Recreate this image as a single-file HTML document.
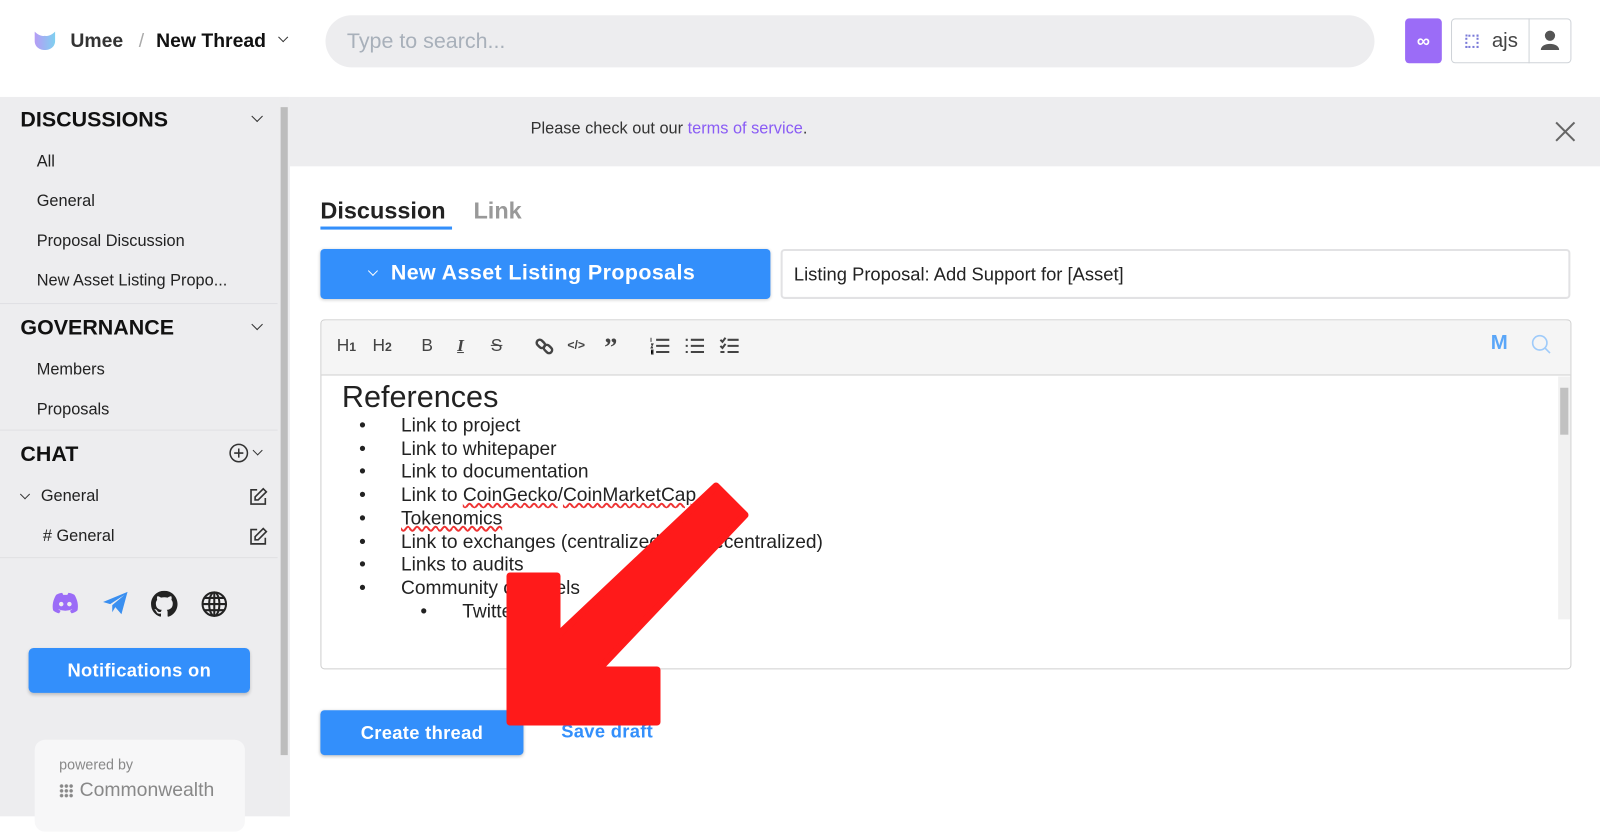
<!DOCTYPE html>
<html><head><meta charset="utf-8">
<style>
*{box-sizing:border-box;margin:0;padding:0}
body{width:1600px;height:800px;overflow:hidden;background:#fff;font-family:"Liberation Sans",Arial,sans-serif;color:#222;position:relative}
#w{position:absolute;left:0;top:0;width:1568px;height:784px;transform:scale(1.0204);transform-origin:0 0}
.a{position:absolute}
.side{left:0;top:95px;width:284px;height:705px;background:#ededef}
.sb{left:274px;top:95px;width:10px;height:705px;background:#ededef}
.sbt{left:275px;top:105px;width:7px;height:635px;background:#bdbdbd}
.hd{font-weight:bold;font-size:21px;color:#111;left:20px}
.it{font-size:16px;color:#222;left:36px}
.sep{left:0;width:272px;height:1px;background:#e0e0e3}
.chev{width:8px;height:8px;border-right:1.6px solid #333;border-bottom:1.6px solid #333;transform:rotate(45deg)}
.tb{font-size:17px;color:#444;font-weight:bold}
</style></head><body>
<div id="w">
<svg class="a" style="left:33px;top:30px" width="22" height="20" viewBox="0 0 22 20"><defs><linearGradient id="g" x1="0" x2="1"><stop offset="0" stop-color="#b69cf5"/><stop offset="1" stop-color="#7fd0f0"/></linearGradient></defs><path d="M1 1 C4 4 8 6 11 5 C14 6 18 4 21 1 L21 10 C21 16 16 19 11 19 C6 19 1 16 1 10Z" fill="url(#g)"/></svg>
<div class="a" style="left:69px;top:30px;font-size:19px;font-weight:bold;color:#333">Umee</div>
<div class="a" style="left:136px;top:30px;font-size:19px;color:#aaa">/</div>
<div class="a" style="left:153px;top:30px;font-size:19px;font-weight:bold;color:#111">New Thread</div>
<div class="a chev" style="left:274px;top:33px;width:7px;height:7px"></div>
<div class="a" style="left:319px;top:15px;width:1028px;height:51px;border-radius:26px;background:#ededef"></div>
<div class="a" style="left:340px;top:29px;font-size:21px;color:#a8b0ba">Type to search...</div>
<div class="a" style="left:1377px;top:18px;width:36px;height:44px;border-radius:4px;background:#9b6cf7;color:#fff;font-size:18px;text-align:center;line-height:44px;font-weight:bold">∞</div>
<div class="a" style="left:1422px;top:18px;width:118px;height:44px;border:1px solid #cfd3d8;border-radius:4px"></div>
<div class="a" style="left:1498px;top:18px;width:1px;height:44px;background:#cfd3d8"></div>
<div class="a" style="left:1436px;top:34px;width:13px;height:13px;border:2px dotted #7a7ad8"></div>
<div class="a" style="left:1462px;top:29px;font-size:20px;color:#444">ajs</div>
<svg class="a" style="left:1509px;top:29px" width="20" height="20" viewBox="0 0 20 20"><circle cx="10" cy="6" r="5" fill="#555"/><path d="M1 20 C1 12 19 12 19 20Z" fill="#555"/></svg>

<div class="a side"></div>
<div class="a sb"></div><div class="a sbt"></div>
<div class="a hd" style="top:106px">DISCUSSIONS</div>
<div class="a chev" style="left:248px;top:110px"></div>
<div class="a it" style="top:150px">All</div>
<div class="a it" style="top:189px">General</div>
<div class="a it" style="top:228px">Proposal Discussion</div>
<div class="a it" style="top:267px">New Asset Listing Propo...</div>
<div class="a sep" style="top:297px"></div>
<div class="a hd" style="top:310px">GOVERNANCE</div>
<div class="a chev" style="left:248px;top:314px"></div>
<div class="a it" style="top:354px">Members</div>
<div class="a it" style="top:393px">Proposals</div>
<div class="a sep" style="top:421px"></div>
<div class="a hd" style="top:434px">CHAT</div>
<svg class="a" style="left:224px;top:434px" width="20" height="20" viewBox="0 0 20 20"><circle cx="10" cy="10" r="8.5" fill="none" stroke="#333" stroke-width="1.5"/><path d="M10 5.5V14.5M5.5 10H14.5" stroke="#333" stroke-width="1.5"/></svg>
<div class="a chev" style="left:249px;top:438px;width:7px;height:7px"></div>
<div class="a chev" style="left:21px;top:481px;width:7px;height:7px"></div>
<div class="a it" style="left:40px;top:478px">General</div>
<div class="a it" style="left:42px;top:517px"># General</div>
<svg class="a" style="left:243px;top:477px" width="20" height="20" viewBox="0 0 20 20" fill="none" stroke="#333" stroke-width="1.6"><path d="M9 3H3V17H17V11"/><path d="M15 2L18 5L10 13H7V10Z"/></svg>
<svg class="a" style="left:243px;top:516px" width="20" height="20" viewBox="0 0 20 20" fill="none" stroke="#333" stroke-width="1.6"><path d="M9 3H3V17H17V11"/><path d="M15 2L18 5L10 13H7V10Z"/></svg>
<div class="a sep" style="top:546px"></div>
<svg class="a" style="left:50px;top:580px" width="28" height="22" viewBox="0 0 28 22"><path d="M5 3C8 1 11 1 11 1L12 3C13 3 15 3 16 3L17 1C17 1 20 1 23 3C26 8 27 13 26 18C24 20 21 21 20 21L18.5 18.5C20 18 21 17 21 17C17 19 11 19 7 17C7 17 8 18 9.5 18.5L8 21C7 21 4 20 2 18C1 13 2 8 5 3Z" fill="#9b6cf7"/><circle cx="10" cy="12" r="2.2" fill="#ededef"/><circle cx="18" cy="12" r="2.2" fill="#ededef"/></svg>
<svg class="a" style="left:100px;top:579px" width="26" height="24" viewBox="0 0 26 24"><path d="M1 11L25 1L19 23L13 16L10 21L10 14L22 4L8 13Z" fill="#3a8ff0"/></svg>
<svg class="a" style="left:148px;top:579px" width="26" height="26" viewBox="0 0 16 16"><path fill="#222" d="M8 0C3.58 0 0 3.58 0 8c0 3.54 2.29 6.53 5.47 7.59.4.07.55-.17.55-.38 0-.19-.01-.82-.01-1.49-2.01.37-2.53-.49-2.69-.94-.09-.23-.48-.94-.82-1.13-.28-.15-.68-.52-.01-.53.63-.01 1.08.58 1.23.82.72 1.21 1.87.87 2.33.66.07-.52.28-.87.51-1.07-1.78-.2-3.64-.89-3.64-3.95 0-.87.31-1.59.82-2.15-.08-.2-.36-1.02.08-2.12 0 0 .67-.21 2.2.82.64-.18 1.32-.27 2-.27.68 0 1.36.09 2 .27 1.53-1.04 2.2-.82 2.2-.82.44 1.1.16 1.92.08 2.12.51.56.82 1.27.82 2.15 0 3.07-1.87 3.75-3.65 3.95.29.25.54.73.54 1.48 0 1.07-.01 1.93-.01 2.2 0 .21.15.46.55.38A8.013 8.013 0 0016 8c0-4.42-3.58-8-8-8z"/></svg>
<svg class="a" style="left:197px;top:579px" width="26" height="26" viewBox="0 0 26 26" fill="none" stroke="#222" stroke-width="2"><circle cx="13" cy="13" r="11.5"/><ellipse cx="13" cy="13" rx="5" ry="11.5"/><path d="M13 1.5V24.5M1.5 13H24.5M3.5 7H22.5M3.5 19H22.5"/></svg>
<div class="a" style="left:28px;top:635px;width:217px;height:44px;border-radius:5px;background:#338ffb;color:#fff;font-weight:bold;font-size:18px;text-align:center;line-height:44px;box-shadow:0 2px 3px rgba(0,0,0,.2);letter-spacing:.3px">Notifications on</div>
<div class="a" style="left:34px;top:725px;width:206px;height:90px;border-radius:10px;background:#f7f7f8"></div>
<div class="a" style="left:58px;top:741px;font-size:14px;color:#888">powered by</div>
<div class="a" style="left:58px;top:768px;width:14px;height:14px;background:radial-gradient(circle,#888 1.5px,transparent 2px) 0 0/4.7px 4.7px"></div>
<div class="a" style="left:78px;top:764px;font-size:19px;color:#888">Commonwealth</div>

<div class="a" style="left:284px;top:95px;width:1316px;height:68px;background:#ededef"></div>
<div class="a" style="left:520px;top:118px;font-size:16px;color:#333">Please check out our <span style="color:#8a5cf5">terms of service</span>.</div>
<svg class="a" style="left:1523px;top:118px" width="22" height="22" viewBox="0 0 22 22" stroke="#666" stroke-width="2"><path d="M2 2L20 20M20 2L2 20"/></svg>

<div class="a" style="left:314px;top:193px;font-size:23px;font-weight:bold;color:#222">Discussion</div>
<div class="a" style="left:314px;top:222px;width:129px;height:3px;background:#338ffb"></div>
<div class="a" style="left:464px;top:193px;font-size:23px;font-weight:bold;color:#999">Link</div>

<div class="a" style="left:314px;top:244px;width:441px;height:49px;border-radius:4px;background:#338ffb;box-shadow:0 1px 3px rgba(0,0,0,.2)"></div>
<div class="a chev" style="left:362px;top:262px;width:7px;height:7px;border-color:#fff"></div>
<div class="a" style="left:383px;top:256px;font-size:21px;font-weight:bold;color:#fff;letter-spacing:.4px">New Asset Listing Proposals</div>
<div class="a" style="left:765px;top:244px;width:774px;height:49px;border:2px solid #e2e2e4;border-radius:4px"></div>
<div class="a" style="left:778px;top:259px;font-size:18px;color:#222">Listing Proposal: Add Support for [Asset]</div>

<div class="a" style="left:314px;top:313px;width:1226px;height:343px;border:1px solid #cfcfcf;border-radius:4px"></div>
<div class="a" style="left:315px;top:314px;width:1224px;height:54px;background:#f5f5f5;border-bottom:1px solid #cfcfcf;border-radius:4px 4px 0 0"></div>
<div class="a tb" style="left:330px;top:329px;font-weight:normal">H<span style="font-size:12px;font-weight:bold">1</span></div>
<div class="a tb" style="left:365px;top:329px;font-weight:normal">H<span style="font-size:12px;font-weight:bold">2</span></div>
<div class="a tb" style="left:413px;top:329px;font-weight:normal">B</div>
<div class="a tb" style="left:448px;top:329px;font-style:italic;font-family:'Liberation Serif',serif;text-decoration:underline">I</div>
<div class="a tb" style="left:481px;top:329px;font-weight:normal;text-decoration:line-through">S</div>
<svg class="a" style="left:524px;top:330px" width="19" height="19" viewBox="0 0 19 19" fill="none" stroke="#444" stroke-width="2.4"><rect x="1.5" y="4" width="9" height="6" rx="3" transform="rotate(45 6 7)"/><rect x="8.5" y="9" width="9" height="6" rx="3" transform="rotate(45 13 12)"/></svg>
<div class="a" style="left:556px;top:331px;font-size:12px;font-weight:bold;color:#444">&lt;/&gt;</div>
<div class="a" style="left:592px;top:326px;font-size:26px;font-weight:bold;color:#444;font-family:'Liberation Serif',serif">”</div>
<svg class="a" style="left:637px;top:330px" width="19" height="18" viewBox="0 0 19 18" stroke="#444" stroke-width="2"><path d="M6 3H19M6 9H19M6 15H19"/><path d="M1 1V5M1 7H3L1 11H3M1 13H3V17H1" stroke-width="1"/></svg>
<svg class="a" style="left:671px;top:330px" width="19" height="18" viewBox="0 0 19 18" stroke="#444" stroke-width="2"><path d="M6 3H19M6 9H19M6 15H19M1 3H3M1 9H3M1 15H3"/></svg>
<svg class="a" style="left:705px;top:330px" width="19" height="18" viewBox="0 0 19 18" stroke="#444" stroke-width="2" fill="none"><path d="M8 3H19M8 9H19M8 15H19M1 3L3 5L6 1M1 9L3 11L6 7M1 15H5"/></svg>
<div class="a" style="left:1461px;top:325px;font-size:20px;font-weight:bold;color:#5aa6f8">M</div>
<svg class="a" style="left:1500px;top:327px" width="22" height="22" viewBox="0 0 22 22" fill="none" stroke="#9fcbfa" stroke-width="1.6"><circle cx="9" cy="9" r="7"/><path d="M14 14L19 19"/></svg>
<div class="a" style="left:1527px;top:369px;width:12px;height:238px;background:#f1f1f1"></div>
<div class="a" style="left:1529px;top:380px;width:8px;height:46px;background:#c1c1c1"></div>
<div class="a" style="left:335px;top:373px;font-size:30px;color:#222">References</div>
<div class="a" style="left:352px;top:406px;font-size:18.8px;line-height:22.7px;color:#222">
<div>•<span style="position:absolute;left:41px;white-space:nowrap">Link to project</span></div>
<div>•<span style="position:absolute;left:41px;white-space:nowrap">Link to whitepaper</span></div>
<div>•<span style="position:absolute;left:41px;white-space:nowrap">Link to documentation</span></div>
<div>•<span style="position:absolute;left:41px;white-space:nowrap">Link to <u style="text-decoration:underline wavy #e33">CoinGecko</u>/<u style="text-decoration:underline wavy #e33">CoinMarketCap</u></span></div>
<div>•<span style="position:absolute;left:41px;white-space:nowrap"><u style="text-decoration:underline wavy #e33">Tokenomics</u></span></div>
<div>•<span style="position:absolute;left:41px;white-space:nowrap">Link to exchanges (centralized and decentralized)</span></div>
<div>•<span style="position:absolute;left:41px;white-space:nowrap">Links to audits</span></div>
<div>•<span style="position:absolute;left:41px;white-space:nowrap">Community channels</span></div>
<div style="padding-left:60px">•<span style="position:absolute;left:101px;white-space:nowrap">Twitter</span></div>
</div>

<div class="a" style="left:314px;top:696px;width:199px;height:44px;border-radius:4px;background:#338ffb;color:#fff;font-weight:bold;font-size:18px;text-align:center;line-height:44px;box-shadow:0 1px 3px rgba(0,0,0,.25);letter-spacing:.3px">Create thread</div>
<div class="a" style="left:550px;top:707px;font-size:18px;font-weight:bold;color:#338ffb;letter-spacing:.3px">Save draft</div>
</div>

<svg class="a" style="left:0;top:0" width="1600" height="800" viewBox="0 0 1600 800"><polygon points="510,576 557,576 557,636 716,486 745,515 598,670 657,670 657,722 510,722" fill="#ff1a1a" stroke="#ff1a1a" stroke-width="7" stroke-linejoin="round"/></svg>
</body></html>
